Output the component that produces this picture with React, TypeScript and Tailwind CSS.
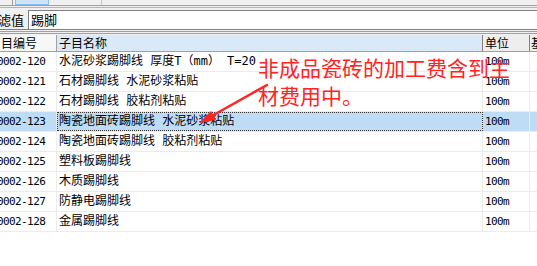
import React from "react";

const rows = [
  { id: "0002-120", name: "水泥砂浆踢脚线 厚度T（mm） T=20" },
  { id: "0002-121", name: "石材踢脚线 水泥砂浆粘贴" },
  { id: "0002-122", name: "石材踢脚线 胶粘剂粘贴" },
  { id: "0002-123", name: "陶瓷地面砖踢脚线 水泥砂浆粘贴", sel: true },
  { id: "0002-124", name: "陶瓷地面砖踢脚线 胶粘剂粘贴" },
  { id: "0002-125", name: "塑料板踢脚线" },
  { id: "0002-126", name: "木质踢脚线" },
  { id: "0002-127", name: "防静电踢脚线" },
  { id: "0002-128", name: "金属踢脚线" },
];

const mono = { fontFamily: '"DejaVu Sans Mono","Noto Sans CJK SC",monospace' };
const cjk = { fontFamily: '"Noto Sans CJK SC","DejaVu Sans",sans-serif' };

export default function App() {
  return (
    <div className="relative w-[537px] h-[266px] overflow-hidden bg-white text-black" style={cjk}>
      {/* top strip */}
      <div className="relative h-[5px] bg-[#f0f0f0] flex">
        <div className="w-[13px] border-r border-[#a0a0a0]" />
        <div className="ml-[2px] w-[34px] bg-[#cfe3f7] border-x border-b border-[#8fbce9]" />
        <div className="w-[53px] border-r border-[#c8c8c8]" />
      </div>
      <div className="h-[1px] bg-[#a0a0a0]" />
      <div className="h-[1px] bg-[#f0f0f0]" />
      <div className="h-[1px] bg-[#b4b4b4]" />
      <div className="h-[2px] bg-[#f0f0f0]" />
      {/* filter row */}
      <div className="flex h-[19px]">
        <div className="w-[28px] bg-[#f0f0f0] overflow-hidden whitespace-nowrap text-[13px] leading-[19px]">
          <span className="ml-[-2px]">滤值</span>
        </div>
        <div className="flex-1 bg-white border-l border-t border-[#808080] pl-[2px] text-[13px] leading-[17px]">
          踢脚
        </div>
      </div>
      <div className="h-[1px] bg-[#808080]" />
      <div className="h-[1px] bg-[#f0f0f0]" />
      <div className="h-[1px] bg-[#a0a0a0]" />
      <div className="h-[1px] bg-[#f0f0f0]" />
      <div className="h-[1px] bg-[#a0a0a0]" />
      <div className="h-[1px] bg-[#f0f0f0]" />
      {/* header */}
      <div className="flex h-[17px] border-b border-[#a0a0a0] text-[12px] leading-[16px]">
        <div className="w-[57px] bg-[#f7f7f7] border-r border-[#a0a0a0] pl-[1px] overflow-hidden whitespace-nowrap">目编号</div>
        <div className="w-[426px] bg-[#d9e9f8] border-r border-[#808080] pl-[2px]">子目名称</div>
        <div className="w-[47px] bg-[#eeeeee] border-r border-[#808080] pl-[2px]">单位</div>
        <div className="flex-1 bg-[#eeeeee] pl-[1px] overflow-hidden whitespace-nowrap">基</div>
      </div>
      {/* rows */}
      {rows.map((r) => (
        <div
          key={r.id}
          className={
            "flex h-[20px] border-b border-[#ececec] text-[12px] leading-[19px] " +
            (r.sel ? "bg-[#bedcf6]" : "bg-white")
          }
        >
          <div className="w-[57px] border-r border-[#ececec] overflow-hidden whitespace-nowrap" style={mono}>
            <span className="ml-[-3px] text-[11px] tracking-[-0.6px]">{r.id}</span>
          </div>
          <div
            className={
              "w-[426px] border-r border-[#ececec] pl-[2px] whitespace-pre overflow-hidden " +
              (r.sel ? "outline outline-1 outline-dotted outline-[#333] outline-offset-[-1px]" : "")
            }
            style={mono}
          >
            {r.name}
          </div>
          <div className="w-[47px] border-r border-[#ececec] pl-[2px] text-[11px] tracking-[-0.6px]" style={mono}>
            100m
          </div>
          <div className="flex-1" />
        </div>
      ))}

      {/* annotation */}
      <div className="absolute left-[258px] top-[53px] text-[21px] leading-[28px] text-[#ff2424] whitespace-nowrap" style={cjk}>
        非成品瓷砖的加工费含到主
        <br />
        材费用中。
      </div>
      <svg className="absolute left-0 top-0" width="537" height="266" viewBox="0 0 537 266">
        <line x1="267" y1="85" x2="210" y2="117" stroke="#ff2424" strokeWidth="2.5" strokeLinecap="round" />
        <polygon points="199,123 216,120 211,111" fill="#ff2424" />
      </svg>
    </div>
  );
}
